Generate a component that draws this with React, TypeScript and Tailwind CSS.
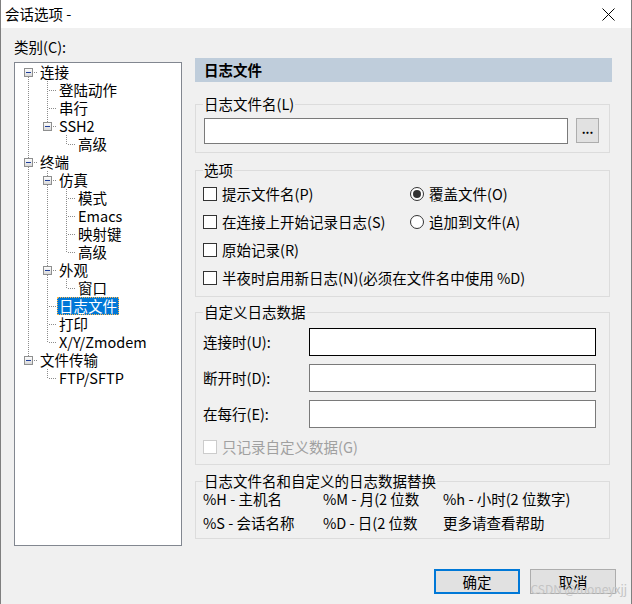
import type { ReactNode } from "react"

interface Node {
  label: string
  children?: Node[]
  selected?: boolean
}

const tree: Node[] = [
  {
    label: "连接",
    children: [
      { label: "登陆动作" },
      { label: "串行" },
      { label: "SSH2", children: [{ label: "高级" }] },
    ],
  },
  {
    label: "终端",
    children: [
      {
        label: "仿真",
        children: [{ label: "模式" }, { label: "Emacs" }, { label: "映射键" }, { label: "高级" }],
      },
      { label: "外观", children: [{ label: "窗口" }] },
      { label: "日志文件", selected: true },
      { label: "打印" },
      { label: "X/Y/Zmodem" },
    ],
  },
  { label: "文件传输", children: [{ label: "FTP/SFTP" }] },
]

interface Row {
  node: Node
  rails: boolean[]
  first: boolean
  last: boolean
}

function flatten(nodes: Node[], rails: boolean[], out: Row[]) {
  nodes.forEach((node, i) => {
    const last = i === nodes.length - 1
    out.push({ node, rails, first: rails.length === 0 && i === 0, last })
    if (node.children) flatten(node.children, [...rails, !last], out)
  })
  return out
}

const rows = flatten(tree, [], [])

const DOT = "#8c8c8c"

function Rail({ on }: { on: boolean }) {
  return (
    <svg width="19" height="18" className="shrink-0">
      {on && <line x1="9.5" y1="0" x2="9.5" y2="18" stroke={DOT} strokeDasharray="1 1" />}
    </svg>
  )
}

function Connector({ row }: { row: Row }) {
  const hasKids = !!row.node.children
  return (
    <svg width="19" height="18" className="shrink-0">
      {!row.first && <line x1="9.5" y1="0" x2="9.5" y2="9" stroke={DOT} strokeDasharray="1 1" />}
      {!row.last && <line x1="9.5" y1="10" x2="9.5" y2="18" stroke={DOT} strokeDasharray="1 1" />}
      <line x1={hasKids ? 15 : 11} y1="9.5" x2="19" y2="9.5" stroke={DOT} strokeDasharray="1 1" />
      {hasKids && (
        <>
          <defs>
            <linearGradient id="bx" x1="0" y1="0" x2="0" y2="1">
              <stop offset="0" stopColor="#ffffff" />
              <stop offset="1" stopColor="#d6d6d6" />
            </linearGradient>
          </defs>
          <rect x="5.5" y="5.5" width="8" height="8" fill="url(#bx)" stroke="#8e8f8f" />
          <line x1="7" y1="9.5" x2="12" y2="9.5" stroke="#1f3f9a" />
        </>
      )}
    </svg>
  )
}

function Tree() {
  return (
    <div className="mt-[6px] h-[484px] border border-[#828790] bg-white pl-[4px]">
      {rows.map((row, i) => (
        <div key={i} className="flex h-[18px] items-center">
          {row.rails.map((on, d) => (
            <Rail key={d} on={on} />
          ))}
          <Connector row={row} />
          <span
            className={
              row.node.selected
                ? "h-[18px] whitespace-nowrap bg-[#0078d7] px-[2px] leading-[18px] text-white outline-1 -outline-offset-1 outline-dotted outline-[#ffb84d]"
                : "h-[18px] whitespace-nowrap px-[2px] leading-[18px]"
            }
          >
            {row.node.label}
          </span>
        </div>
      ))}
    </div>
  )
}

function Checkbox({ label, disabled }: { label: string; disabled?: boolean }) {
  return (
    <div className="flex h-[28px] items-center whitespace-nowrap">
      <span
        className={
          disabled
            ? "h-[14px] w-[14px] shrink-0 border border-[#cccccc] bg-white"
            : "h-[14px] w-[14px] shrink-0 border border-[#333333] bg-white"
        }
      />
      <span className={disabled ? "ml-[5px] text-[#a0a0a0]" : "ml-[5px]"}>{label}</span>
    </div>
  )
}

function Radio({ label, checked }: { label: string; checked?: boolean }) {
  return (
    <div className="flex h-[28px] items-center whitespace-nowrap">
      <span className="flex h-[14px] w-[14px] shrink-0 items-center justify-center rounded-full border border-[#333333] bg-white">
        {checked && <span className="h-[8px] w-[8px] rounded-full bg-[#333333]" />}
      </span>
      <span className="ml-[5px]">{label}</span>
    </div>
  )
}

function Group({ title, className, children }: { title: string; className: string; children: ReactNode }) {
  return (
    <fieldset className={`w-[415px] border border-[#dcdcdc] px-[7px] ${className}`}>
      <legend className="px-[1px] leading-[18px]">{title}</legend>
      {children}
    </fieldset>
  )
}

function Field({ label, dark }: { label: string; dark?: boolean }) {
  return (
    <div className="flex h-[28px] items-center">
      <span className="w-[106px] shrink-0 whitespace-nowrap">{label}</span>
      <div
        className={
          dark
            ? "h-[28px] w-[287px] border border-[#000000] bg-white"
            : "h-[28px] w-[287px] border border-[#7a7a7a] bg-white"
        }
      />
    </div>
  )
}

export default function App() {
  return (
    <div className="relative h-[604px] w-[632px] overflow-hidden border-x border-[#7f7f7f] bg-[#f0f0f0] font-['Noto_Sans_CJK_SC',sans-serif] text-[14.5px] text-black">
      {/* Title bar */}
      <div className="flex h-[28px] items-center justify-between bg-white pl-[4px] pr-[16px]">
        <span className="leading-[18px]">会话选项 -</span>
        <svg width="13" height="13" viewBox="0 0 13 13">
          <path d="M0.5 0.5 L12.5 12.5 M12.5 0.5 L0.5 12.5" stroke="#000" strokeWidth="1" />
        </svg>
      </div>

      <div className="flex gap-[13px] pl-[13px]">
        {/* Category tree */}
        <div className="w-[168px] pt-[10px]">
          <div className="h-[18px] leading-[18px]">类别(C):</div>
          <Tree />
        </div>

        {/* Settings panel */}
        <div className="w-[417px] pt-[30px]">
          <div className="h-[24px] bg-[#bfcddb] pl-[9px] font-bold leading-[24px]">日志文件</div>

          <Group title="日志文件名(L)" className="mt-[13px] pb-[8px]">
            <div className="mt-[5px] flex items-start">
              <div className="ml-px h-[26px] w-[364px] border border-[#7a7a7a] bg-white" />
              <div className="ml-[8px] flex h-[25px] w-[23px] items-center justify-center border border-[#adadad] bg-[#e1e1e1] pb-[4px] text-[12px] font-bold leading-none">
                ...
              </div>
            </div>
          </Group>

          <Group title="选项" className="mt-[8px] pb-[4px]">
            <div className="grid grid-cols-[207px_1fr] pt-[1px]">
              <Checkbox label="提示文件名(P)" />
              <Radio label="覆盖文件(O)" checked />
              <Checkbox label="在连接上开始记录日志(S)" />
              <Radio label="追加到文件(A)" />
              <div className="col-span-2">
                <Checkbox label="原始记录(R)" />
              </div>
              <div className="col-span-2">
                <Checkbox label="半夜时启用新日志(N)(必须在文件名中使用 %D)" />
              </div>
            </div>
          </Group>

          <Group title="自定义日志数据" className="mt-[6px] pb-[3px]">
            <div className="flex flex-col gap-[8px] pt-[7px]">
              <Field label="连接时(U):" dark />
              <Field label="断开时(D):" />
              <Field label="在每行(E):" />
            </div>
            <div className="mt-[5px]">
              <Checkbox label="只记录自定义数据(G)" disabled />
            </div>
          </Group>

          <Group title="日志文件名和自定义的日志数据替换" className="mt-[7px] pb-[6px]">
            <div className="grid grid-cols-[120px_120px_1fr] gap-y-[6px] whitespace-nowrap leading-[18px]">
              <span>%H - 主机名</span>
              <span>%M - 月(2 位数</span>
              <span>%h - 小时(2 位数字)</span>
              <span>%S - 会话名称</span>
              <span>%D - 日(2 位数</span>
              <span>更多请查看帮助</span>
            </div>
          </Group>
        </div>
      </div>

      {/* Buttons */}
      <div className="mt-[23px] flex justify-end gap-[10px] pr-[15px]">
        <div className="flex h-[25px] w-[86px] items-center justify-center border-2 border-[#0078d7] bg-[#e1e1e1] leading-[18px]">
          确定
        </div>
        <div className="flex h-[25px] w-[86px] items-center justify-center border border-[#adadad] bg-[#e1e1e1] leading-[18px]">
          取消
        </div>
      </div>

      <span className="absolute right-[4px] bottom-[8px] text-[12px] leading-[14px] text-[#c4c4c4]">
        CSDN @moneyxjj
      </span>
    </div>
  )
}
